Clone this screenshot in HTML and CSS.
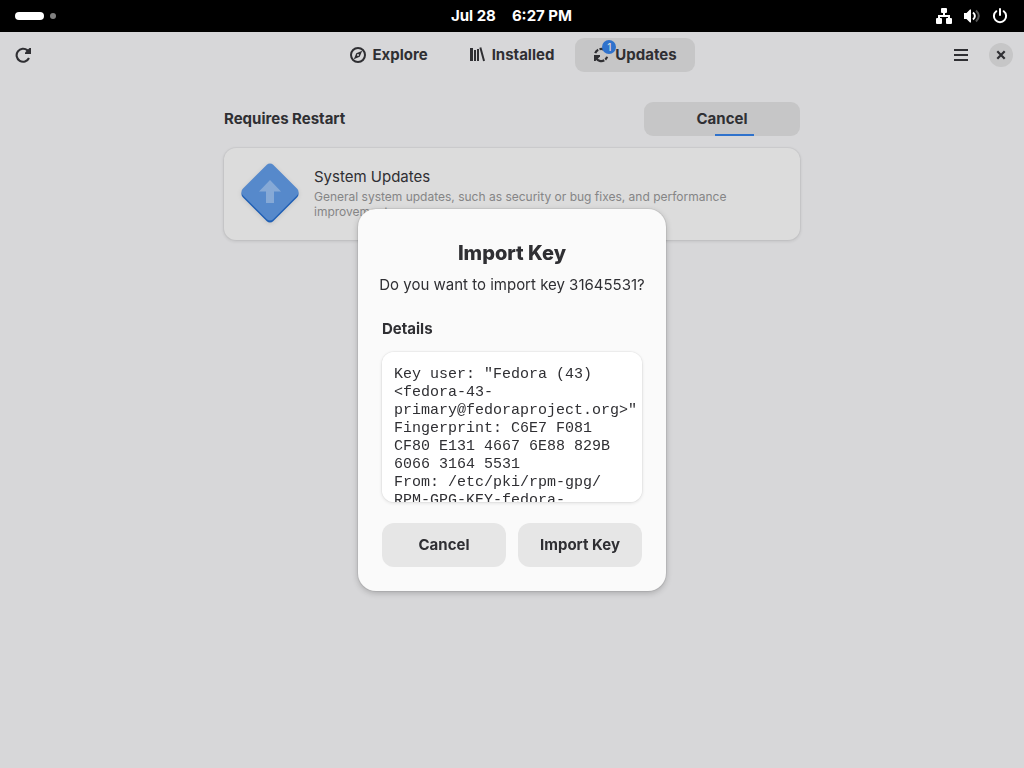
FILE: index.html
```html
<!DOCTYPE html>
<html lang="en">
<head>
<meta charset="utf-8">
<title>Software</title>
<link rel="stylesheet" href="styles.css">
</head>
<body>
<div class="topbar">
  <div class="workspaces"><span class="pill"></span><span class="dot"></span></div>
  <div class="clock"><span>Jul 28</span><span>6:27 PM</span></div>
  <div class="status">
    <svg width="16" height="16" viewBox="0 0 16 16" fill="#fff"><path d="M6 0h4a1 1 0 0 1 1 1v3a1 1 0 0 1-1 1H9v2h5v3h1a1 1 0 0 1 1 1v4a1 1 0 0 1-1 1h-4a1 1 0 0 1-1-1v-4a1 1 0 0 1 1-1h1V9H4v1h1a1 1 0 0 1 1 1v4a1 1 0 0 1-1 1H1a1 1 0 0 1-1-1v-4a1 1 0 0 1 1-1h1V7h5V5H6a1 1 0 0 1-1-1V1a1 1 0 0 1 1-1z"/></svg>
    <svg width="16" height="16" viewBox="0 0 16 16" fill="none" stroke-width="2"><path d="M0 5h2.500L6 1.500h1v13H6L2.500 11H0z" fill="#fff"/><path d="M9 4.500c2.500 2 2.500 5 0 7" stroke="#fff"/><path d="M12 2.500c3.500 3.500 3.500 7.500 0 11" stroke="#555"/></svg>
    <svg width="16" height="16" viewBox="0 0 16 16" fill="none" stroke="#fff" stroke-width="2" stroke-linecap="round"><path d="M4.300 3.200a6.100 6.100 0 1 0 7.400 0M8 1v6"/></svg>
  </div>
</div>

<div class="window">
  <header class="headerbar">
    <button class="icon-button" aria-label="Refresh">
      <svg width="16" height="16" viewBox="0 0 16 16" fill="none" stroke="#2f2f33" stroke-width="2.100"><path d="M14 11A6.500 6.500 0 1 1 12.500 3.400L14 5"/><path d="M16 1v6h-6V5.500L14.500 1z" fill="#2f2f33" stroke="none"/></svg>
    </button>
    <nav class="tabs">
      <button class="tab">
        <svg width="16" height="16" viewBox="0 0 16 16" fill="none" stroke="#2f2f33" stroke-width="2"><circle cx="8" cy="8" r="7"/><path fill="#2f2f33" fill-rule="evenodd" stroke="none" d="M12.200 3.800 9.700 9.700 3.800 12.200l2.500-5.900zM8 7a1 1 0 1 0 0 2 1 1 0 0 0 0-2z"/></svg>
        <span>Explore</span>
      </button>
      <button class="tab">
        <svg width="16" height="16" viewBox="0 0 16 16" fill="#2f2f33"><path d="M0 1h3v13H0zM4 3h2v11H4zM7 2h2v12H7zM9.400 .7l1.900-.5 3.700 13.500-1.900.5z"/></svg>
        <span>Installed</span>
      </button>
      <button class="tab selected">
        <span class="badged">
          <svg width="16" height="16" viewBox="0 0 16 16" fill="none" stroke="#2f2f33" stroke-width="2.200"><path d="M2.200 6.200a6.200 6.200 0 0 1 3-3.400M6.500 2.200a6.200 6.200 0 0 1 4 .2M3 11a6.200 6.200 0 0 0 8.300 2.300M12.300 12.600a6.200 6.200 0 0 0 1.800-2.800"/><path d="M1 8h6v1.500L2.500 14H1z" fill="#2f2f33" stroke="none"/></svg>
          <span class="badge">1</span>
        </span>
        <span>Updates</span>
      </button>
    </nav>
    <div class="window-actions">
      <button class="icon-button" aria-label="Main menu">
        <svg width="16" height="16" viewBox="0 0 16 16" fill="#2f2f33"><path d="M1 2h14v2H1zM1 7h14v2H1zM1 12h14v2H1z"/></svg>
      </button>
      <button class="close" aria-label="Close">
        <svg width="10" height="10" viewBox="0 0 10 10" fill="none" stroke="#2f2f33" stroke-width="2.200"><path d="M1.300 1.300l7.400 7.400M8.700 1.300 1.300 8.700"/></svg>
      </button>
    </div>
  </header>

  <main class="content">
    <div class="section-head">
      <h2>Requires Restart</h2>
      <button class="button progress-button">Cancel<span class="progress"></span></button>
    </div>
    <article class="update-card">
      <svg class="update-icon" width="64" height="64" viewBox="0 0 64 64"><rect x="12" y="13" width="40" height="40" rx="3" transform="rotate(45 32 33)" fill="#1f5fb4" stroke="#1f5fb4" stroke-width="3"/><rect x="12" y="11" width="40" height="40" rx="3" transform="rotate(45 32 31)" fill="#5689cb" stroke="#5689cb" stroke-width="3"/><path d="M32 19 43 30.500H36V42H28V30.500H21z" fill="#86a9d6"/></svg>
      <div class="update-text">
        <h3>System Updates</h3>
        <p>General system updates, such as security or bug fixes, and performance improvements.</p>
      </div>
    </article>
  </main>

  <div class="overlay">
    <section class="dialog" role="dialog" aria-labelledby="dialog-title">
      <h1 id="dialog-title">Import Key</h1>
      <p class="question">Do you want to import key 31645531?</p>
      <h2 class="details-title">Details</h2>
      <div class="details">Key user: "Fedora (43)<br>&lt;fedora-43-<br>primary@fedoraproject.org&gt;"<br>Fingerprint: C6E7 F081<br>CF80 E131 4667 6E88 829B<br>6066 3164 5531<br>From: /etc/pki/rpm-gpg/<br>RPM-GPG-KEY-fedora-</div>
      <div class="responses">
        <button class="button">Cancel</button>
        <button class="button">Import Key</button>
      </div>
    </section>
  </div>
</div>
</body>
</html>
```
FILE: styles.css
```css
* { box-sizing: border-box; }

body {
  margin: 0;
  min-height: 100vh;
  display: flex;
  flex-direction: column;
  background: #d7d7d9;
  color: #2f2f33;
  font: 15px/20px Inter, "Noto Sans", sans-serif;
}

h1, h2, h3, p { margin: 0; }
h2 { font-size: 15px; font-weight: 700; }
svg { display: block; flex: none; }

button {
  border: 0;
  padding: 0;
  background: none;
  color: inherit;
  font: inherit;
  font-weight: 700;
}

.topbar {
  display: grid;
  grid-template-columns: 1fr auto 1fr;
  align-items: center;
  height: 32px;
  padding: 0 16px 0 15px;
  background: #000;
  color: #fff;
  font-weight: 700;
}
.workspaces { display: flex; align-items: center; gap: 6px; }
.pill { width: 29px; height: 8px; border-radius: 4px; background: #fff; }
.dot { width: 6px; height: 6px; border-radius: 50%; background: #808080; }
.clock { display: flex; gap: 16px; }
.status { display: flex; justify-content: flex-end; gap: 12px; }

.window { position: relative; flex: 1; display: flex; flex-direction: column; }

.headerbar {
  display: grid;
  grid-template-columns: 1fr auto 1fr;
  align-items: center;
  height: 46px;
  padding: 0 6px;
}
.icon-button {
  display: grid;
  place-items: center;
  width: 34px;
  height: 34px;
}
.tabs { display: flex; gap: 3px; }
.tab {
  display: flex;
  align-items: center;
  justify-content: center;
  gap: 6px;
  width: 120px;
  height: 34px;
  border-radius: 9px;
}
.tab.selected { background: #c6c6c7; }
.badged { position: relative; }
.badge {
  position: absolute;
  top: -7px;
  left: 9px;
  width: 14px;
  height: 14px;
  border-radius: 50%;
  background: #2f72cc;
  color: #dcdcdc;
  font-size: 10px;
  font-weight: 500;
  line-height: 14px;
  text-align: center;
}
.window-actions {
  display: flex;
  align-items: center;
  justify-content: flex-end;
  gap: 11px;
  padding-right: 5px;
}
.close {
  display: grid;
  place-items: center;
  width: 24px;
  height: 24px;
  border-radius: 50%;
  background: #c6c6c7;
}

.content {
  width: 100%;
  max-width: 600px;
  margin: 0 auto;
  padding: 24px 12px;
}
.section-head {
  display: flex;
  align-items: center;
  justify-content: space-between;
  margin-bottom: 12px;
}
.button { border-radius: 9px; background: #c6c6c7; }
.progress-button { position: relative; width: 156px; height: 34px; }
.progress {
  position: absolute;
  bottom: 0;
  left: 71px;
  width: 39px;
  height: 2px;
  background: #2f72cc;
}
.update-card {
  display: flex;
  align-items: center;
  gap: 12px;
  min-height: 92px;
  padding: 13px 14px 15px;
  border-radius: 12px;
  background: #dcdcdc;
  box-shadow: 0 0 0 1px rgba(0, 0, 0, .03), 0 1px 3px 1px rgba(0, 0, 0, .08);
}
.update-icon { filter: drop-shadow(0 1px 2px rgba(0, 0, 0, .1)); }
.update-text { flex: 1; }
.update-text h3 { font-size: 15px; font-weight: 400; }
.update-text p { max-width: 450px; margin-top: 2px; font-size: 12px; line-height: 15px; color: #858586; }

.overlay {
  position: absolute;
  inset: 0;
  display: flex;
  align-items: center;
  justify-content: center;
}
.dialog {
  width: 308px;
  padding: 32px 24px 24px;
  border-radius: 18px;
  background: #fafafa;
  box-shadow: 0 0 0 1px rgba(0, 0, 0, .06), 0 2px 6px rgba(0, 0, 0, .22);
}
.dialog h1 { font-size: 20px; font-weight: 800; line-height: 24px; text-align: center; }
.question {
  display: flex;
  justify-content: center;
  margin-top: 10px;
  white-space: nowrap;
}
.details-title { margin-top: 24px; }
.details {
  height: 150px;
  margin-top: 13px;
  padding: 14px 0 0 12px;
  overflow-y: auto;
  scrollbar-width: none;
  border-radius: 12px;
  background: #fff;
  box-shadow: 0 0 0 1px rgba(0, 0, 0, .03), 0 1px 3px 1px rgba(0, 0, 0, .07);
  font: 15px/18px "Liberation Mono", monospace;
  white-space: nowrap;
}
.responses {
  display: grid;
  grid-template-columns: 1fr 1fr;
  gap: 12px;
  margin-top: 21px;
}
.responses .button { height: 44px; border-radius: 12px; background: #e6e6e6; }
```
